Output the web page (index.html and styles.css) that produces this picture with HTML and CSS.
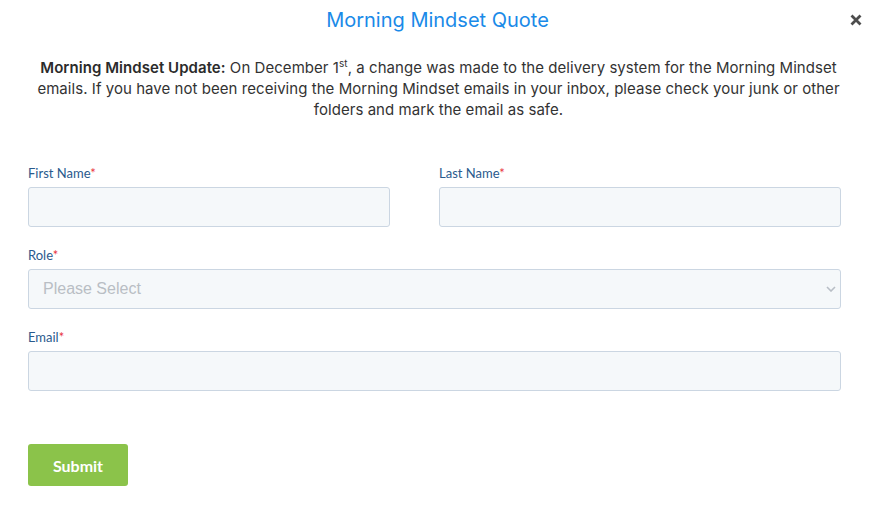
FILE: index.html
```html
<!DOCTYPE html>
<html lang="en">
<head>
<meta charset="utf-8">
<title>Morning Mindset Quote</title>
<link rel="stylesheet" href="styles.css">
</head>
<body>
<div class="modal">
  <header class="modal-header">
    <h1 class="modal-title">Morning Mindset Quote</h1>
    <span class="close" aria-label="Close"><svg width="12" height="12" viewBox="0 0 12 12"><path d="M1.5 1.5 L10.5 10.5 M10.5 1.5 L1.5 10.5" stroke="#4d4d4d" stroke-width="2.8" stroke-linecap="butt"/></svg></span>
  </header>
  <p class="notice"><strong>Morning Mindset Update:</strong> On December 1<sup>st</sup>, a change was made to the delivery system for the Morning Mindset<br>emails. If you have not been receiving the Morning Mindset emails in your inbox, please check your junk or other<br>folders and mark the email as safe.</p>
  <form class="form">
    <div class="row two">
      <div class="field first">
        <label class="label">First Name<span class="req">*</span></label>
        <input class="input" type="text">
      </div>
      <div class="field">
        <label class="label">Last Name<span class="req">*</span></label>
        <input class="input" type="text">
      </div>
    </div>
    <div class="field">
      <label class="label">Role<span class="req">*</span></label>
      <div class="select">
        <span class="placeholder">Please Select</span>
        <svg class="chev" width="10" height="6" viewBox="0 0 10 6"><path d="M1 1 L5 5 L9 1" fill="none" stroke="#b8bec6" stroke-width="1.6"/></svg>
      </div>
    </div>
    <div class="field">
      <label class="label">Email<span class="req">*</span></label>
      <input class="input" type="email">
    </div>
    <div class="actions">
      <button class="submit" type="button">Submit</button>
    </div>
  </form>
</div>
</body>
</html>
```
FILE: styles.css
```css
* { box-sizing: border-box; }
html, body { margin: 0; padding: 0; background: #fff; }
body { font-family: Inter, "Noto Sans", sans-serif; }
.modal { width: 877px; padding: 0 36px 0 28px; position: relative; }
.modal-header { height: 40px; display: flex; align-items: center; justify-content: center; }
.modal-title { margin: 0; font-family: Inter, sans-serif; font-weight: 400; font-size: 20px; line-height: 40px; color: #1a8ae8; padding-left: 6px; }
.close { position: absolute; right: 15px; top: 14px; display: flex; }
.notice { margin: 17px 0 0 0; text-align: center; font-size: 15px; line-height: 21px; color: #333; padding-left: 8px; letter-spacing: 0.05px; }
.notice strong { font-weight: 600; color: #2b2b2b; }
.notice sup { font-size: 10px; line-height: 0; vertical-align: 6px; }
.form { margin-top: 45px; width: 813px; }
.row.two { display: grid; grid-template-columns: 411px 402px; }
.field { margin-bottom: 20px; }
.field.first .input { width: 362px; }
.label { display: block; font-family: Lato, sans-serif; font-size: 13px; line-height: 16px; color: #2a5a8d; margin-bottom: 6px; }
.req { color: #e8323c; }
.input, .select { display: block; width: 100%; height: 40px; background: #f5f8fa; border: 1px solid #cbd6e2; border-radius: 3px; margin: 0; padding: 0 14px; font-family: "Liberation Sans", Arial, sans-serif; font-size: 16px; }
.select { display: flex; align-items: center; justify-content: space-between; }
.placeholder { color: #b9bec4; font-size: 16px; }
.chev { margin-right: -10px; }
.actions { padding-top: 33px; }
.submit { width: 100px; height: 42px; background: #8bc34a; color: #fff; border: 0; border-radius: 3px; font-family: Lato, sans-serif; font-weight: 700; font-size: 16px; padding: 0; }
```
